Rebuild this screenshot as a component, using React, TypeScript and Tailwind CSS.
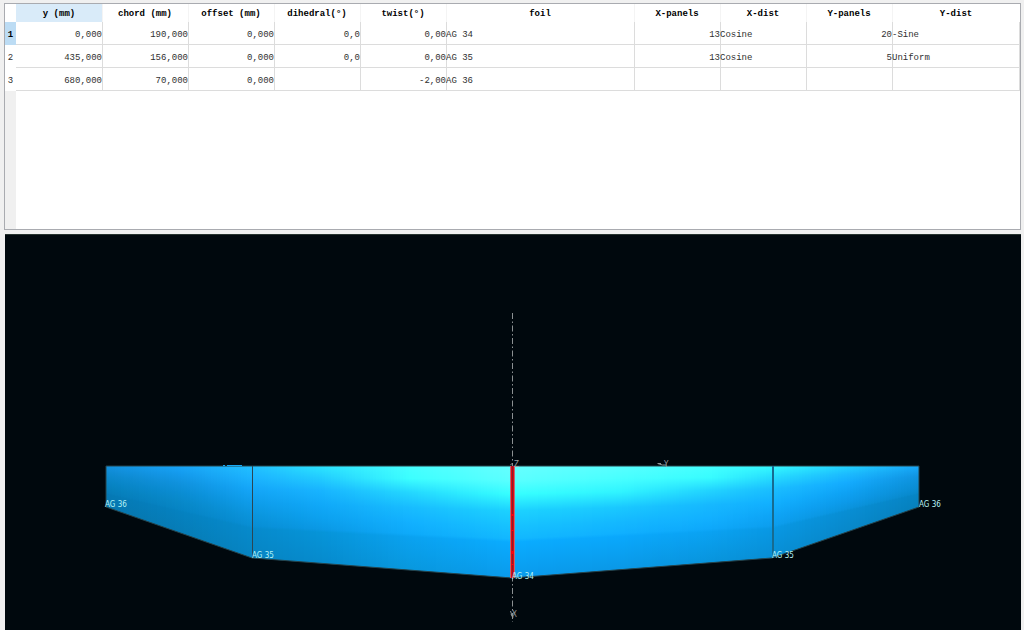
import React from "react";

type Section = {
  y: string;
  chord: string;
  offset: string;
  dihedral: string;
  twist: string;
  foil: string;
  xPanels: string;
  xDist: string;
  yPanels: string;
  yDist: string;
};

const sections: Section[] = [
  { y: "0,000", chord: "190,000", offset: "0,000", dihedral: "0,0", twist: "0,00", foil: "AG 34", xPanels: "13", xDist: "Cosine", yPanels: "20", yDist: "-Sine" },
  { y: "435,000", chord: "156,000", offset: "0,000", dihedral: "0,0", twist: "0,00", foil: "AG 35", xPanels: "13", xDist: "Cosine", yPanels: "5", yDist: "Uniform" },
  { y: "680,000", chord: "70,000", offset: "0,000", dihedral: "", twist: "-2,00", foil: "AG 36", xPanels: "", xDist: "", yPanels: "", yDist: "" },
];

const columns: { key: keyof Section; title: string; width: string; align: string }[] = [
  { key: "y", title: "y (mm)", width: "w-[86px]", align: "text-right" },
  { key: "chord", title: "chord (mm)", width: "w-[86px]", align: "text-right" },
  { key: "offset", title: "offset (mm)", width: "w-[86px]", align: "text-right" },
  { key: "dihedral", title: "dihedral(°)", width: "w-[86px]", align: "text-right" },
  { key: "twist", title: "twist(°)", width: "w-[86px]", align: "text-right" },
  { key: "foil", title: "foil", width: "w-[188px]", align: "text-left" },
  { key: "xPanels", title: "X-panels", width: "w-[86px]", align: "text-right" },
  { key: "xDist", title: "X-dist", width: "w-[86px]", align: "text-left" },
  { key: "yPanels", title: "Y-panels", width: "w-[86px]", align: "text-right" },
  { key: "yDist", title: "Y-dist", width: "", align: "text-left" },
];

function SectionTable() {
  return (
    <div className="h-[227px] shrink-0 border border-[#a9abb0] bg-[#f0f0f0] pl-[11px]">
      <div className="h-full bg-white">
        <table className="-ml-[11px] w-[calc(100%+11px)] table-fixed border-separate border-spacing-0 font-['Liberation_Mono','Courier_New',monospace] text-[9px] leading-3 text-[#303030]">
          <colgroup>
            <col className="w-[11px]" />
            {columns.map((c) => (
              <col key={c.key} className={c.width} />
            ))}
          </colgroup>
          <thead>
            <tr className="h-[18px] text-black">
              <td className="bg-white p-0" />
              {columns.map((c, i) => (
                <th key={c.key} scope="col" className={`px-0 pt-[2px] pb-0 ${i === 0 ? "bg-[#d9ebf9]" : "shadow-[inset_1px_0_0_#f4f4f4]"}`}>
                  {c.title}
                </th>
              ))}
            </tr>
          </thead>
          <tbody>
            {sections.map((s, r) => (
              <tr key={s.foil} className="h-[23px]">
                <th scope="row" className={`px-0 pt-[2px] pb-0 text-center ${r === 0 ? "bg-[#bcdcf4] font-bold text-black" : "bg-white font-normal"}`}>
                  {r + 1}
                </th>
                {columns.map((c, i) => (
                  <td
                    key={c.key}
                    className={`px-0 pt-[2px] pb-0 whitespace-nowrap last:border-r last:border-[#dcdcdc] ${i === 0 ? "shadow-[inset_0_-1px_0_#dcdcdc]" : "shadow-[inset_1px_-1px_0_#dcdcdc]"} ${c.align}`}
                  >
                    {s[c.key]}
                  </td>
                ))}
              </tr>
            ))}
          </tbody>
        </table>
      </div>
    </div>
  );
}

// Chordwise positions of the shading samples, leading edge to trailing edge.
const chordStops = [0, 0.12, 0.25, 0.4, 0.54, 0.65, 0.68, 1];

// Surface colours at chosen span stations.
const stations: { x: number; colors: string[] }[] = [
  { x: 106, colors: ["1292e0", "108cd6", "0c88cc", "0884c4", "0680bc", "067cb8", "0579b4", "0676ae"] },
  { x: 180, colors: ["18a4f8", "149aec", "1092de", "0a8cd2", "0888c8", "0684c4", "0581c0", "067cb6"] },
  { x: 252, colors: ["22c0ff", "1cb4ff", "14a6f8", "0e9cea", "0a94dc", "088ed4", "068acc", "0684c2"] },
  { x: 320, colors: ["2ce4ff", "22ccff", "18b4ff", "10a8f8", "0ca0ee", "0a98e4", "0694d8", "068acc"] },
  { x: 410, colors: ["46ffff", "3cffff", "24d8ff", "18bcff", "12b0ff", "0eaafa", "0aa2f0", "0898de"] },
  { x: 512, colors: ["66ffff", "5cffff", "36ffff", "1cd2ff", "16c2ff", "12b8ff", "0aacff", "0a9aec"] },
  { x: 620, colors: ["58ffff", "48ffff", "30f4ff", "1ac8ff", "14b8ff", "10b0ff", "0aa8fc", "0a98e6"] },
  { x: 710, colors: ["44ffff", "38fcff", "22d4ff", "16b8ff", "12b0ff", "0ea8fa", "0aa2f2", "0894dc"] },
  { x: 772, colors: ["36faff", "26dcff", "1abeff", "12b0ff", "0ea4f6", "0c9eee", "0898e4", "088ed4"] },
  { x: 845, colors: ["24d4ff", "1cbcff", "14acff", "0ea2f4", "0c9aea", "0a94de", "088ed4", "0888ca"] },
  { x: 919, colors: ["18a8fc", "149eee", "1094e0", "0c90d8", "0a8cd2", "0888ca", "0684c4", "0680bc"] },
];

const trailingEdge: [number, number][] = [
  [106, 507],
  [252, 558],
  [512, 578],
  [772, 558],
  [919, 507],
];

function mix(a: string, b: string, t: number) {
  const channel = (i: number) => {
    const from = parseInt(a.slice(i, i + 2), 16);
    const to = parseInt(b.slice(i, i + 2), 16);
    return Math.round(from + (to - from) * t);
  };
  return `rgb(${channel(0)},${channel(2)},${channel(4)})`;
}

function edgeAt(x: number) {
  let i = 0;
  while (i < trailingEdge.length - 2 && x > trailingEdge[i + 1][0]) i++;
  const [x0, y0] = trailingEdge[i];
  const [x1, y1] = trailingEdge[i + 1];
  return y0 + ((y1 - y0) * (x - x0)) / (x1 - x0);
}

function shadeAt(x: number) {
  let i = 0;
  while (i < stations.length - 2 && x > stations[i + 1].x) i++;
  const a = stations[i];
  const b = stations[i + 1];
  return a.colors.map((c, k) => mix(c, b.colors[k], (x - a.x) / (b.x - a.x)));
}

const wingOutline = "106,466 919,466 919,507 772,558 512,578 252,558 106,507";
const stripWidth = 3;
const strips = Array.from({ length: 271 }, (_, i) => 106 + i * stripWidth);

function WingView() {
  return (
    <section aria-label="Wing view" className="ml-px min-h-0 flex-1 border-t border-[#26332f] bg-[#00080d]">
      <svg viewBox="5 235 1016 395" className="block h-full w-full" role="img" aria-label="Wing planform">
        <defs>
          <clipPath id="wing">
            <polygon points={wingOutline} />
          </clipPath>
          {strips.map((x, i) => (
            <linearGradient key={x} id={`s${i}`} gradientUnits="userSpaceOnUse" x1="0" x2="0" y1="466" y2={edgeAt(x + stripWidth / 2)}>
              {shadeAt(x + stripWidth / 2).map((c, k) => (
                <stop key={k} offset={chordStops[k]} stopColor={c} />
              ))}
            </linearGradient>
          ))}
        </defs>
        <g clipPath="url(#wing)" shapeRendering="crispEdges">
          {strips.map((x, i) => (
            <rect key={x} x={x} y="466" width={stripWidth} height="113" fill={`url(#s${i})`} />
          ))}
        </g>
        <polygon points={wingOutline} fill="none" stroke="#25434b" strokeWidth="1" />
        <path d="M223 465.5h2M227 465.5h15" stroke="#18a8f4" strokeWidth="1" />
        <path d="M252.5 466V558" stroke="#2b4653" strokeWidth="1" />
        <path d="M773 466V558" stroke="#176b90" strokeWidth="2" />
        <path d="M512.5 313V622" stroke="#8b9092" strokeWidth="1" strokeDasharray="6 2.5 1.5 2.5" />
        <path d="M512.5 466V578" stroke="#b96c78" strokeWidth="5" />
        <path d="M512.5 466V578" stroke="#e20812" strokeWidth="3" />
        <path d="M512.5 466V578" stroke="#86202c" strokeWidth="1" />
        <path d="M512.5 514v2M512.5 530v1M512.5 551v3M512.5 564v1" stroke="#ff0010" strokeWidth="2" />
        <path d="M510.5 464.5l2-1M657.5 463.5l5 1.5h4M658 463.5h3M510.5 611l1.5 4.5 1.5-3M511 614l2 4" fill="none" stroke="#8d9495" strokeWidth="1" />
        <g fontFamily="'DejaVu Sans Condensed', 'Open Sans', sans-serif" fontSize="8" fill="#b5f2f5">
          <text x="105" y="507">AG 36</text>
          <text x="252" y="558">AG 35</text>
          <text x="512" y="579">AG 34</text>
          <text x="772" y="558">AG 35</text>
          <text x="919" y="507">AG 36</text>
          <g fill="#9b9fa0">
            <text x="514" y="467">Z</text>
            <text x="664" y="467">Y</text>
            <text x="512" y="617">X</text>
          </g>
        </g>
      </svg>
    </section>
  );
}

export default function App() {
  return (
    <main className="flex h-screen flex-col gap-1 overflow-hidden bg-[#f0f0f0] pt-[3px] pr-[3px] pl-1">
      <SectionTable />
      <WingView />
    </main>
  );
}
